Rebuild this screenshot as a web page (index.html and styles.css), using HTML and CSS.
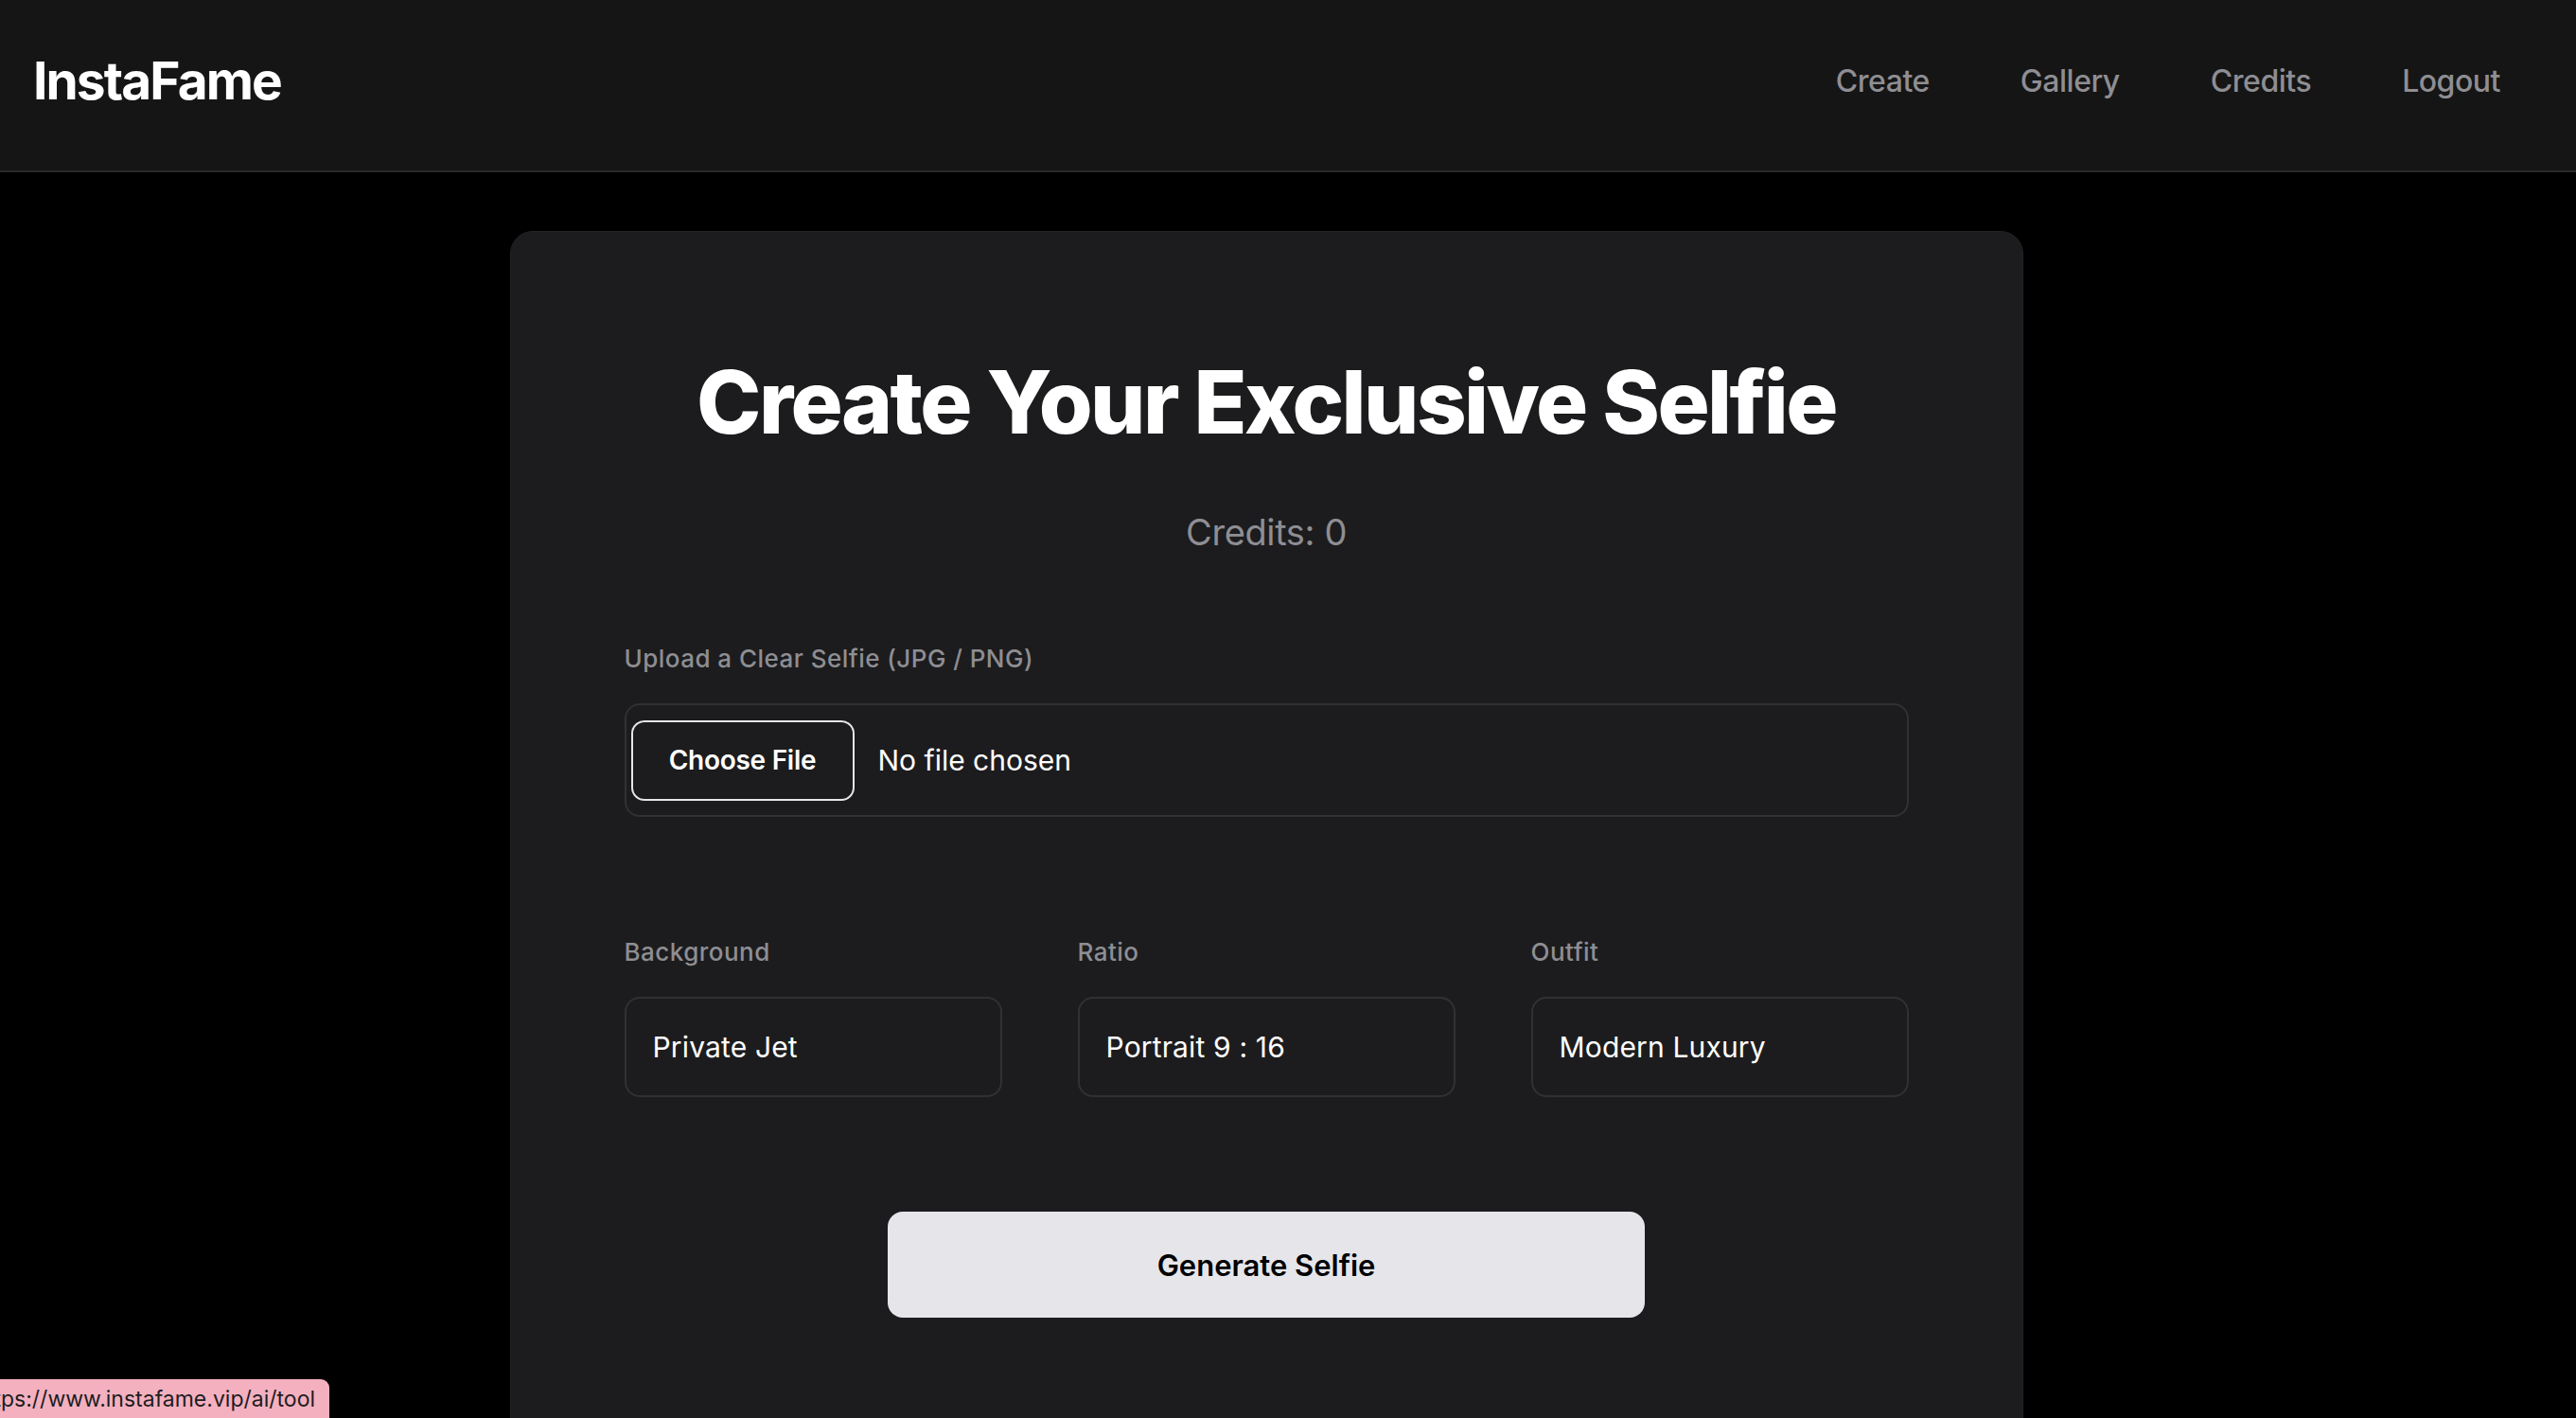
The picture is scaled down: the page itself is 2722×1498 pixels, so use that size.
FILE: index.html
```html
<!DOCTYPE html>
<html lang="en">
<head>
<meta charset="utf-8">
<title>InstaFame</title>
<link rel="stylesheet" href="styles.css">
</head>
<body>
<header class="topbar">
  <div class="logo">InstaFame</div>
  <nav class="nav">
    <a class="nav-link" href="#">Create</a>
    <a class="nav-link" href="#">Gallery</a>
    <a class="nav-link" href="#">Credits</a>
    <a class="nav-link" href="#">Logout</a>
  </nav>
</header>
<main class="main">
  <section class="card">
    <h1 class="title">Create Your Exclusive Selfie</h1>
    <p class="credits">Credits: 0</p>

    <div class="field upload-field">
      <div class="label">Upload a Clear Selfie (JPG / PNG)</div>
      <div class="file-box">
        <span class="file-btn">Choose File</span>
        <span class="file-name">No file chosen</span>
      </div>
    </div>

    <div class="options">
      <div class="field">
        <div class="label">Background</div>
        <div class="select">Private Jet</div>
      </div>
      <div class="field">
        <div class="label">Ratio</div>
        <div class="select">Portrait 9 : 16</div>
      </div>
      <div class="field">
        <div class="label">Outfit</div>
        <div class="select">Modern Luxury</div>
      </div>
    </div>

    <div class="actions">
      <button class="generate">Generate Selfie</button>
    </div>
  </section>
</main>
<div class="status-bubble"><span class="status-text">https://www.instafame.vip/ai/tool</span></div>
</body>
</html>
```
FILE: styles.css
```css
* { box-sizing: border-box; }
html, body {
  margin: 0;
  padding: 0;
  background: #000;
  height: 100%;
  overflow: hidden;
}
body {
  font-family: Inter, "Noto Sans", "Liberation Sans", sans-serif;
  color: #fff;
}
.topbar {
  height: 182px;
  background: #151515;
  border-bottom: 2px solid #2a2a2a;
  display: flex;
  align-items: center;
  justify-content: space-between;
  padding: 0 80px 10px 35px;
}
.logo {
  font-size: 55px;
  font-weight: 700;
  letter-spacing: -0.035em;
  color: #fff;
}
.nav {
  display: flex;
  gap: 96px;
}
.nav-link {
  font-size: 32px;
  font-weight: 500;
  letter-spacing: -0.015em;
  color: #8e8e93;
  text-decoration: none;
}
.main {
  padding: 62px 46px 0 0;
}
.card {
  width: 1599px;
  margin: 0 auto;
  background: #1c1c1e;
  border: 1px solid #232325;
  border-radius: 24px;
  padding: 125px 120px 120px;
  min-height: 1400px;
}
.title {
  margin: 0;
  text-align: center;
  font-size: 92px;
  line-height: 110px;
  font-weight: 800;
  letter-spacing: -0.028em;
  color: #fff;
}
.credits {
  margin: 59px 0 0;
  text-align: center;
  font-size: 38px;
  line-height: 46px;
  color: #8e8e93;
  letter-spacing: -0.01em;
}
.upload-field {
  margin-top: 94px;
}
.label {
  font-size: 26px;
  line-height: 34px;
  font-weight: 500;
  letter-spacing: 0.018em;
  color: #8e8e93;
  margin-bottom: 30px;
}
.file-box {
  height: 120px;
  border: 2px solid #313133;
  border-radius: 16px;
  display: flex;
  align-items: center;
  padding: 0 5px;
  gap: 25px;
}
.file-btn {
  height: 85px;
  width: 236px;
  border: 2px solid #e5e5ea;
  border-radius: 14px;
  display: flex;
  align-items: center;
  justify-content: center;
  font-size: 28px;
  font-weight: 600;
  letter-spacing: -0.01em;
  color: #fff;
}
.file-name {
  font-size: 30px;
  color: #fff;
}
.options {
  margin-top: 126px;
  display: grid;
  grid-template-columns: repeat(3, 1fr);
  gap: 80px;
}
.select {
  height: 106px;
  border: 2px solid #313133;
  border-radius: 16px;
  display: flex;
  align-items: center;
  padding-left: 28px;
  font-size: 30px;
  color: #fff;
  letter-spacing: 0.005em;
}
.actions {
  margin-top: 121px;
  display: flex;
  justify-content: center;
}
.generate {
  width: 800px;
  height: 112px;
  border: none;
  border-radius: 16px;
  background: #e5e5ea;
  color: #000;
  font-family: inherit;
  font-size: 31px;
  font-weight: 600;
  letter-spacing: 0;
}
.status-bubble {
  position: fixed;
  left: 0;
  bottom: 0;
  width: 348px;
  height: 41px;
  background: #f4b0bf;
  border-top-right-radius: 9px;
  display: flex;
  align-items: center;
  justify-content: flex-end;
  padding-right: 15px;
  overflow: hidden;
}
.status-text {
  white-space: nowrap;
  font-size: 23px;
  color: #1d1d1f;
  font-family: Inter, "Noto Sans", sans-serif;
}
```
